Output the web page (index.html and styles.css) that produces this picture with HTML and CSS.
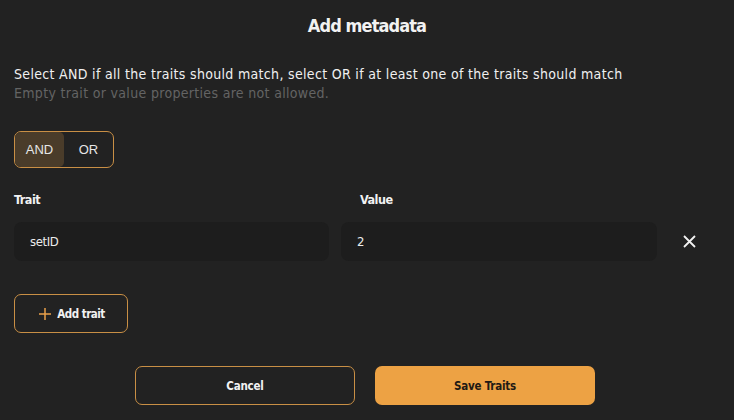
FILE: index.html
```html
<!DOCTYPE html>
<html>
<head>
<meta charset="utf-8">
<link rel="stylesheet" href="styles.css">
</head>
<body>
<div class="modal">
  <h1 class="title">Add metadata</h1>
  <p class="desc">Select AND if all the traits should match, select OR if at least one of the traits should match</p>
  <p class="hint">Empty trait or value properties are not allowed.</p>
  <div class="toggle">
    <button class="seg active">AND</button>
    <button class="seg">OR</button>
  </div>
  <div class="grid">
    <div class="label">Trait</div>
    <div class="label value-label">Value</div>
    <div></div>
    <div class="input">setID</div>
    <div class="input">2</div>
    <div class="remove">
      <svg width="13" height="13" viewBox="0 0 13 13"><path d="M1 1L12 12M12 1L1 12" stroke="#f2f2f2" stroke-width="1.8" fill="none"/></svg>
    </div>
  </div>
  <button class="add">
    <svg width="12" height="12" viewBox="0 0 12 12"><path d="M6 0V12M0 6H12" stroke="#e9a04a" stroke-width="1.5" fill="none"/></svg>
    <span>Add trait</span>
  </button>
  <div class="actions">
    <button class="btn cancel">Cancel</button>
    <button class="btn save">Save Traits</button>
  </div>
</div>
</body>
</html>
```
FILE: styles.css
```css
* { box-sizing: border-box; }
html, body { margin: 0; padding: 0; }
body {
  background: #222222;
  width: 734px;
  height: 420px;
  overflow: hidden;
  font-family: "DejaVu Sans Condensed", "DejaVu Sans", sans-serif;
  font-stretch: condensed;
  color: #f2f2f2;
}
.modal {
  padding: 0 14px;
  display: flex;
  flex-direction: column;
}
.title {
  margin: 14px 0 0;
  height: 24px;
  line-height: 24px;
  font-size: 18px;
  font-weight: bold;
  letter-spacing: -0.9px;
  text-align: center;
}
.desc {
  margin: 27px 0 0;
  font-size: 14px;
  letter-spacing: 0.32px;
  line-height: 19px;
  color: #f0f0f0;
}
.hint {
  margin: 0;
  font-size: 14px;
  letter-spacing: 0.32px;
  line-height: 19px;
  color: #646464;
}
.toggle {
  margin-top: 28px;
  width: 100px;
  height: 37px;
  border: 1px solid #c98f45;
  border-radius: 7px;
  display: flex;
  padding: 0;
  overflow: hidden;
}
.seg {
  flex: 1;
  border: none;
  background: transparent;
  color: #e6e6e6;
  font-family: "Liberation Sans", Arial, sans-serif;
  font-size: 13px;
  padding: 0;
}
.seg.active {
  background: #4a3c2a;
  border-radius: 5px;
  flex: 0 0 49px;
}
.grid {
  margin-top: 23px;
  display: grid;
  grid-template-columns: 315px 316px 1fr;
  column-gap: 12px;
  row-gap: 14px;
  align-items: center;
}
.label {
  font-size: 12.5px;
  font-weight: bold;
  letter-spacing: -0.5px;
  line-height: 17px;
}
.value-label { padding-left: 19px; }
.input {
  height: 39px;
  background: #1d1d1d;
  border-radius: 8px;
  padding: 0 16px;
  display: flex;
  align-items: center;
  font-size: 13px;
  letter-spacing: -0.4px;
  color: #ececec;
}
.remove {
  display: flex;
  align-items: center;
  padding-left: 14px;
}
.add {
  margin-top: 33px;
  align-self: flex-start;
  width: 114px;
  height: 39px;
  background: transparent;
  border: 1px solid #c98f45;
  border-radius: 7px;
  color: #f2f2f2;
  display: flex;
  align-items: center;
  justify-content: center;
  gap: 6px;
  font-family: inherit;
  font-size: 11.5px;
  font-weight: bold;
  letter-spacing: -0.5px;
  padding: 0 0 0 2px;
}
.actions {
  margin-top: 33px;
  display: flex;
  padding-left: 121px;
  gap: 20px;
}
.btn {
  width: 220px;
  height: 39px;
  border-radius: 7px;
  font-family: inherit;
  font-size: 11.5px;
  font-weight: bold;
  letter-spacing: -0.2px;
}
.cancel {
  background: transparent;
  border: 1px solid #c98f45;
  color: #f2f2f2;
}
.save {
  background: #eda244;
  border: none;
  color: #1f1a14;
}
```
